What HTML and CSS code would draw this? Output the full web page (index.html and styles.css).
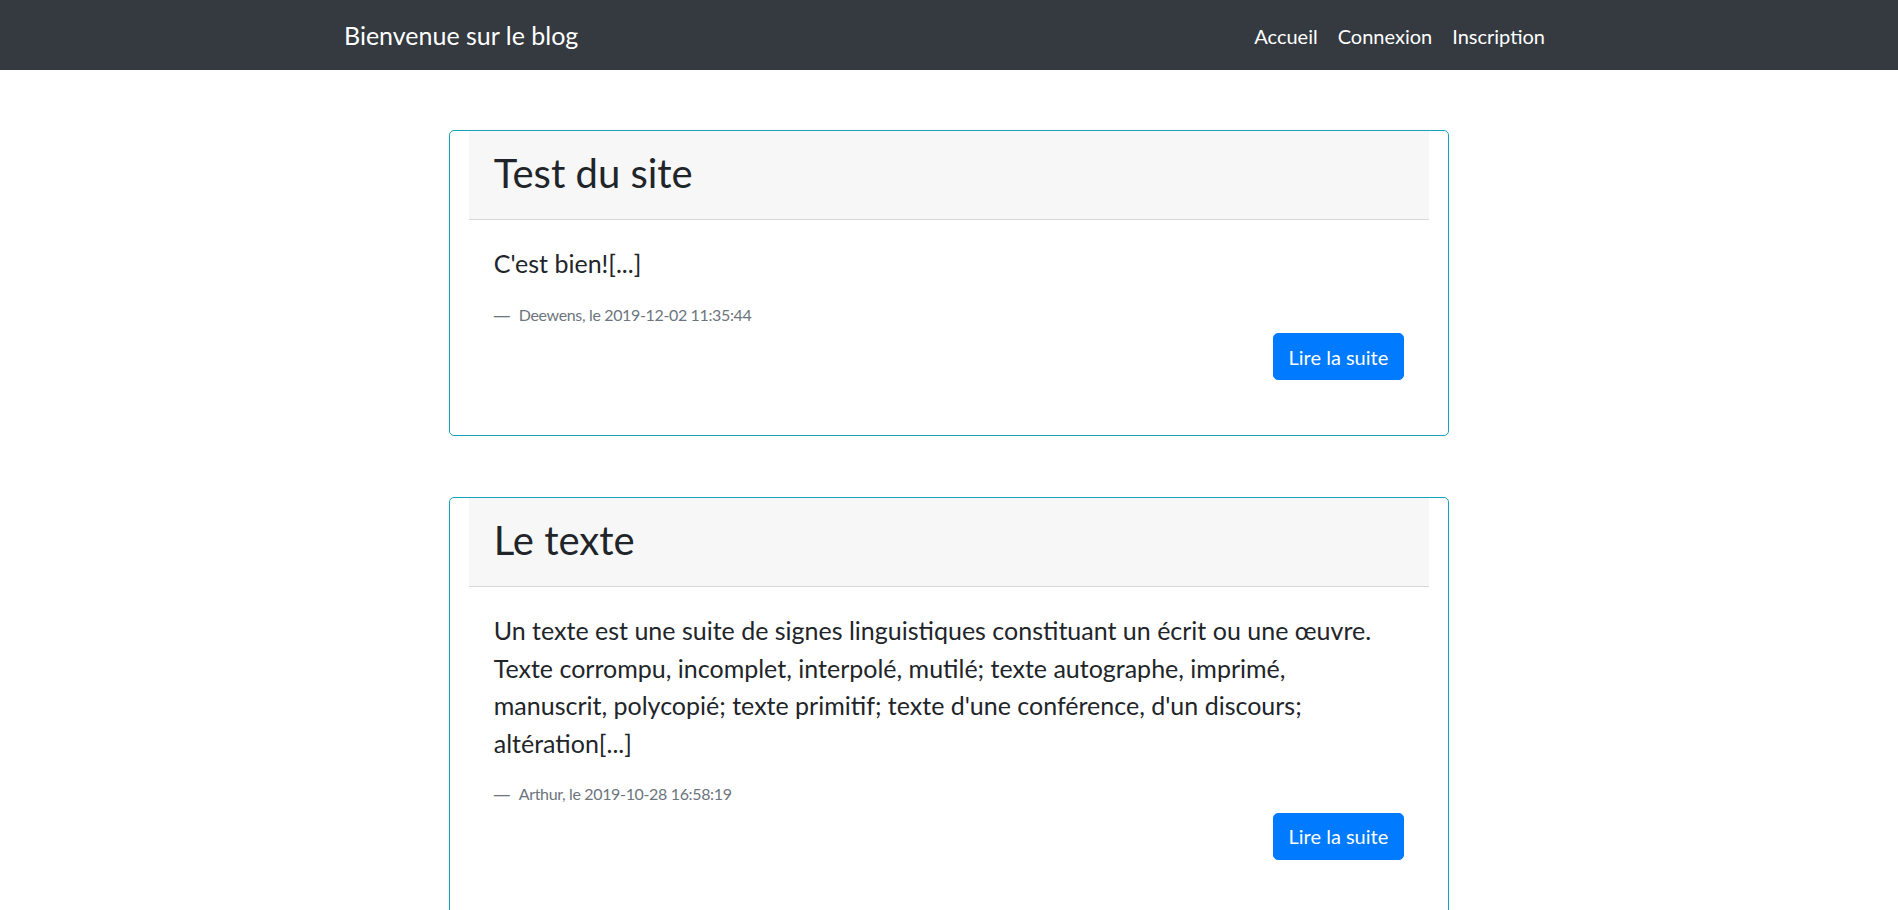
FILE: index.html
```html
<!DOCTYPE html>
<html lang="fr">
<head>
<meta charset="utf-8">
<title>Bienvenue sur le blog</title>
<link rel="stylesheet" href="styles.css">
</head>
<body>
<nav class="navbar">
  <div class="nav-inner">
    <a class="brand" href="#">Bienvenue sur le blog</a>
    <ul class="nav-links">
      <li><a href="#">Accueil</a></li>
      <li><a href="#">Connexion</a></li>
      <li><a href="#">Inscription</a></li>
    </ul>
  </div>
</nav>
<main class="posts">
  <article class="card">
    <header class="card-header"><h2>Test du site</h2></header>
    <div class="card-body">
      <blockquote class="quote">
        <p>C'est bien![...]</p>
        <footer class="quote-footer">Deewens, le 2019-12-02 11:35:44</footer>
      </blockquote>
      <div class="actions"><a class="btn" href="#">Lire la suite</a></div>
    </div>
  </article>
  <article class="card">
    <header class="card-header"><h2>Le texte</h2></header>
    <div class="card-body">
      <blockquote class="quote">
        <p>Un texte est une suite de signes linguistiques constituant un écrit ou une œuvre. Texte corrompu, incomplet, interpolé, mutilé; texte autographe, imprimé, manuscrit, polycopié; texte primitif; texte d'une conférence, d'un discours; altération[...]</p>
        <footer class="quote-footer">Arthur, le 2019-10-28 16:58:19</footer>
      </blockquote>
      <div class="actions"><a class="btn" href="#">Lire la suite</a></div>
    </div>
  </article>
</main>
</body>
</html>
```
FILE: styles.css
```css
* { box-sizing: border-box; }
html, body { margin: 0; padding: 0; }
body {
  font-family: Lato, "Open Sans", "Liberation Sans", sans-serif;
  color: #212529;
  background: #fff;
  font-size: 20px;
  line-height: 1.5;
}
a { text-decoration: none; }

.navbar {
  background: #343a40;
  height: 70px;
  display: flex;
  align-items: center;
  padding-top: 2px;
}
.nav-inner {
  width: 1212px;
  margin: 0 auto;
  padding-left: 1px;
  display: flex;
  align-items: center;
  justify-content: space-between;
}
.brand {
  color: #fff;
  font-size: 25px;
  line-height: 37.5px;
}
.nav-links {
  list-style: none;
  margin: 0;
  padding: 0;
  display: flex;
}
.nav-links a {
  display: block;
  color: #fff;
  font-size: 20px;
  line-height: 30px;
  padding: 5px 10px;
}

.posts {
  width: 1000px;
  margin: 60px auto 0;
}
.card {
  border: 1px solid #17a2b8;
  border-radius: 5px;
  padding: 0 18.75px;
  margin-bottom: 61px;
}
.card-header {
  background: #f7f7f7;
  border-bottom: 1px solid rgba(0,0,0,.125);
  padding: 17.5px 25px 22.5px;
}
.card-header h2 {
  margin: 0;
  font-size: 40px;
  line-height: 48px;
  font-weight: 400;
}
.card-body {
  padding: 25px 25px 55px;
}
.quote { margin: 0; }
.quote p {
  margin: 0 0 20px;
  font-size: 25px;
  line-height: 37.5px;
}
.quote-footer {
  display: block;
  font-size: 16px;
  line-height: 24px;
  color: #6c757d;
  letter-spacing: -0.35px;
  margin-bottom: 5.5px;
}
.quote-footer::before {
  content: "\2014";
  display: inline-block;
  width: 25px;
  letter-spacing: 0;
  font-family: "Liberation Sans", sans-serif;
}
.actions { text-align: right; }
.btn {
  display: inline-block;
  background: #007bff;
  color: #fff;
  border: 1px solid #007bff;
  border-radius: 5px;
  font-size: 20px;
  line-height: 30px;
  padding: 7.5px 15px;
}
```
